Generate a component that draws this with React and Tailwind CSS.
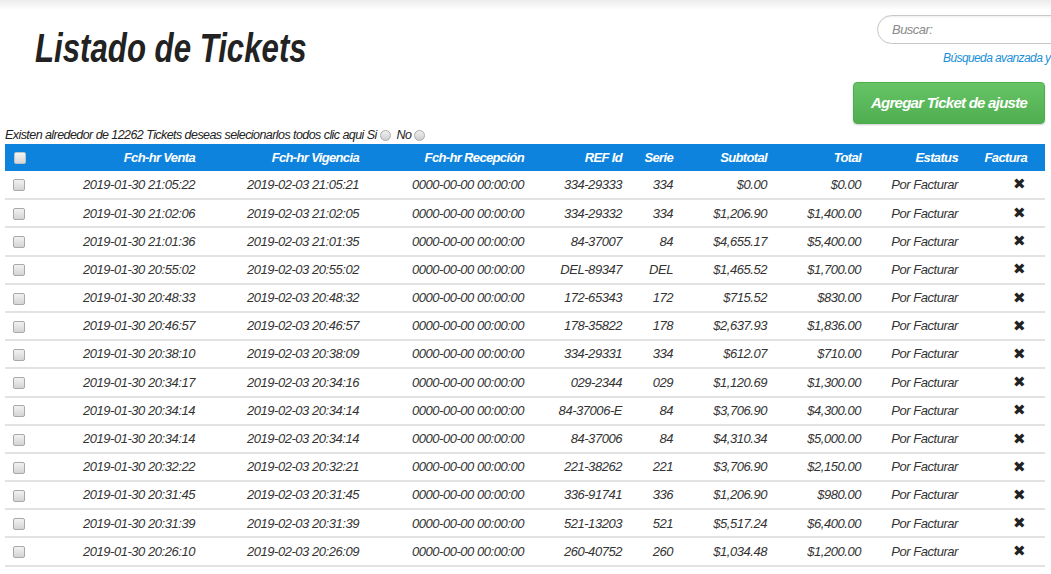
import React from 'react';

const tickets = [
  ['2019-01-30 21:05:22', '2019-02-03 21:05:21', '334-29333', '334', '$0.00', '$0.00'],
  ['2019-01-30 21:02:06', '2019-02-03 21:02:05', '334-29332', '334', '$1,206.90', '$1,400.00'],
  ['2019-01-30 21:01:36', '2019-02-03 21:01:35', '84-37007', '84', '$4,655.17', '$5,400.00'],
  ['2019-01-30 20:55:02', '2019-02-03 20:55:02', 'DEL-89347', 'DEL', '$1,465.52', '$1,700.00'],
  ['2019-01-30 20:48:33', '2019-02-03 20:48:32', '172-65343', '172', '$715.52', '$830.00'],
  ['2019-01-30 20:46:57', '2019-02-03 20:46:57', '178-35822', '178', '$2,637.93', '$1,836.00'],
  ['2019-01-30 20:38:10', '2019-02-03 20:38:09', '334-29331', '334', '$612.07', '$710.00'],
  ['2019-01-30 20:34:17', '2019-02-03 20:34:16', '029-2344', '029', '$1,120.69', '$1,300.00'],
  ['2019-01-30 20:34:14', '2019-02-03 20:34:14', '84-37006-E', '84', '$3,706.90', '$4,300.00'],
  ['2019-01-30 20:34:14', '2019-02-03 20:34:14', '84-37006', '84', '$4,310.34', '$5,000.00'],
  ['2019-01-30 20:32:22', '2019-02-03 20:32:21', '221-38262', '221', '$3,706.90', '$2,150.00'],
  ['2019-01-30 20:31:45', '2019-02-03 20:31:45', '336-91741', '336', '$1,206.90', '$980.00'],
  ['2019-01-30 20:31:39', '2019-02-03 20:31:39', '521-13203', '521', '$5,517.24', '$6,400.00'],
  ['2019-01-30 20:26:10', '2019-02-03 20:26:09', '260-40752', '260', '$1,034.48', '$1,200.00'],
];

const Check = ({ light }) => (
  <span
    className={`inline-block w-[12px] h-[12px] rounded-[2px] border align-middle ${
      light
        ? 'border-[#b8c4cc] bg-gradient-to-b from-[#f4f4f4] to-[#d8d8d8]'
        : 'border-[#a9a9a9] bg-gradient-to-b from-[#f2f2f2] to-[#d4d4d4]'
    }`}
  ></span>
);

const Radio = () => (
  <span className="inline-block w-[11px] h-[11px] rounded-full border border-[#aaa] bg-gradient-to-b from-[#f0f0f0] to-[#cfcfcf] align-[-2px]"></span>
);

const cell = 'pr-[6px] text-right whitespace-nowrap';

export default function App() {
  return (
    <div className="w-full h-[574px] overflow-hidden bg-white font-['Liberation_Sans',Arial,sans-serif] italic text-[#333]">
      <div className="h-[10px] bg-gradient-to-b from-[#ececec] to-white"></div>

      <div className="flex">
        <div className="w-[877px] shrink-0 pl-[35px] pt-[18px]">
          <h1 className="inline-block origin-left scale-x-[0.78] text-[40px] leading-[40px] font-bold text-[#222] whitespace-nowrap">
            Listado de Tickets
          </h1>
        </div>
        <div className="w-[174px] shrink-0 pt-[5px] overflow-hidden">
          <div className="w-[220px] h-[29px] rounded-full border border-[#c8c8c8] shadow-[inset_0_1px_2px_rgba(0,0,0,0.08)] pl-[14px] flex items-center text-[13px] text-[#8a8a8a] tracking-[-0.04em]">
            Buscar:
          </div>
          <div className="mt-[6px] pl-[66px] text-[12px] leading-[16px] text-[#1b8fd9] tracking-[-0.05em] whitespace-nowrap">
            Búsqueda avanzada y
          </div>
        </div>
      </div>

      <div className="flex justify-end pr-[6px] mt-[13px]">
        <button className="w-[192px] h-[42px] rounded-[4px] border border-[#4cae4c] bg-gradient-to-b from-[#66c466] to-[#4fae4f] shadow-[0_1px_2px_rgba(0,0,0,0.2)] text-white font-bold text-[15px] tracking-[-0.05em] italic">
          Agregar Ticket de ajuste
        </button>
      </div>

      <div className="mt-[3px] pl-[5px] text-[12.5px] leading-[17px] tracking-[-0.045em] text-[#222] whitespace-nowrap">
        Existen alrededor de 12262 Tickets deseas selecionarlos todos clic aqui Si <Radio /> &nbsp;No <Radio />
      </div>

      <div className="px-[5px]">
        <table className="w-[1040px] table-fixed border-collapse text-[13px] tracking-[-0.035em]">
          <colgroup>
            <col className="w-[55px]" />
            <col className="w-[141px]" />
            <col className="w-[164px]" />
            <col className="w-[165px]" />
            <col className="w-[98px]" />
            <col className="w-[51px]" />
            <col className="w-[94px]" />
            <col className="w-[94px]" />
            <col className="w-[97px]" />
            <col className="w-[81px]" />
          </colgroup>
          <thead>
            <tr className="h-[27px] bg-[#0d83dd] text-white font-bold tracking-[-0.05em]">
              <th className="pl-[9px] text-left"><Check light /></th>
              <th className={cell}>Fch-hr Venta</th>
              <th className={cell}>Fch-hr Vigencia</th>
              <th className={cell}>Fch-hr Recepción</th>
              <th className={cell}>REF Id</th>
              <th className={cell}>Serie</th>
              <th className={cell}>Subtotal</th>
              <th className={cell}>Total</th>
              <th className={cell}>Estatus</th>
              <th className="pr-[18px] text-right">Factura</th>
            </tr>
          </thead>
          <tbody>
            {tickets.map((t, i) => (
              <tr key={i} className="h-[28.2px] border-b-2 border-[#e2e2e2]">
                <td className="pl-[8px]"><Check /></td>
                <td className={cell}>{t[0]}</td>
                <td className={cell}>{t[1]}</td>
                <td className={cell}>0000-00-00 00:00:00</td>
                <td className={cell}>{t[2]}</td>
                <td className={cell}>{t[3]}</td>
                <td className={cell}>{t[4]}</td>
                <td className={cell}>{t[5]}</td>
                <td className={cell}>Por Facturar</td>
                <td className="pr-[20px] text-right not-italic text-[15px] text-[#222] font-['DejaVu_Sans',sans-serif]">✖</td>
              </tr>
            ))}
          </tbody>
        </table>
      </div>
    </div>
  );
}
